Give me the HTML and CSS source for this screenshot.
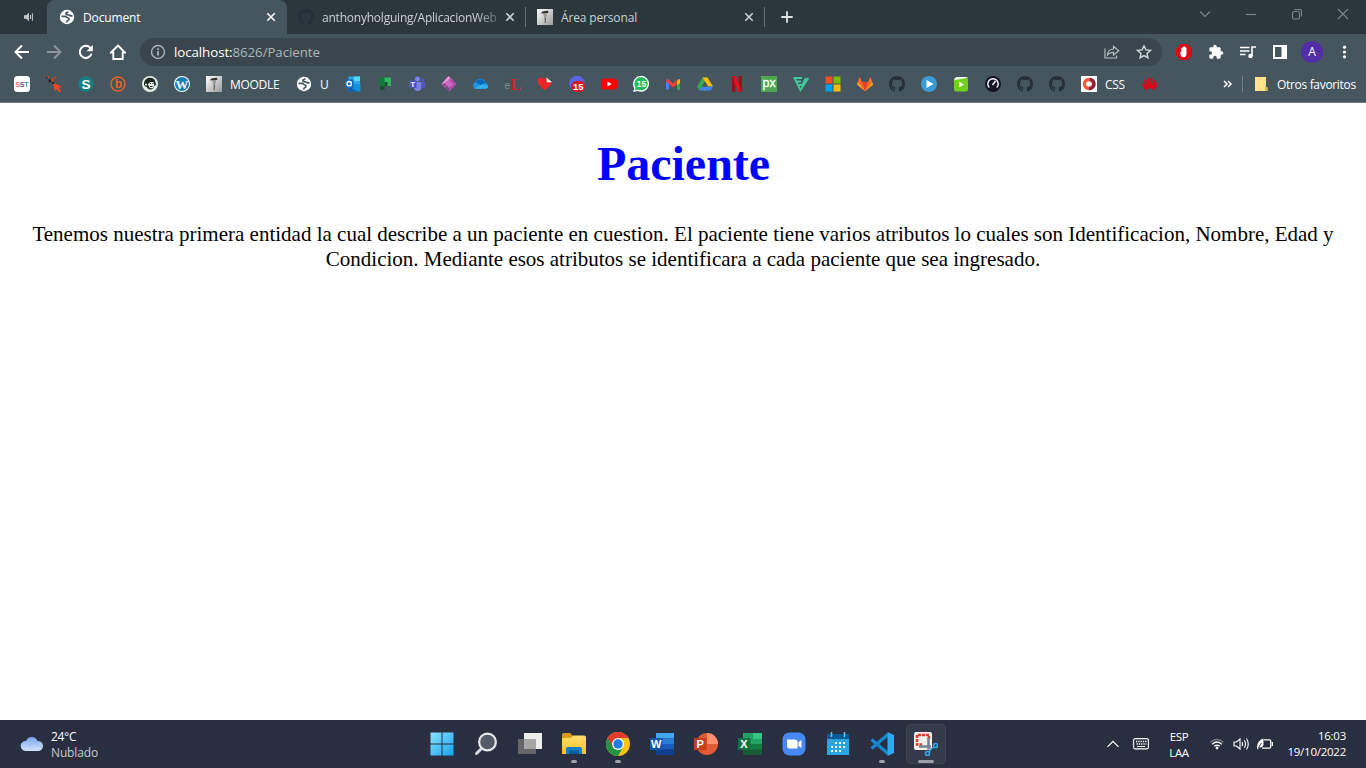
FILE: index.html
```html
<!DOCTYPE html>
<html lang="es">
<head>
<meta charset="utf-8">
<title>Document</title>
<link rel="stylesheet" href="styles.css">
</head>
<body>
<svg class="defs" width="0" height="0">
  <defs>
    <linearGradient id="silver" x1="0" y1="0" x2="1" y2="1"><stop offset="0" stop-color="#fff"/><stop offset="1" stop-color="#999"/></linearGradient>
    <linearGradient id="win" x1="0" y1="0" x2="1" y2="1"><stop offset="0" stop-color="#8be2fc"/><stop offset="1" stop-color="#13a4f4"/></linearGradient>
    <linearGradient id="cloud" x1="0" y1="0" x2="0" y2="1"><stop offset="0" stop-color="#7ba5ee"/><stop offset="1" stop-color="#d2e4fb"/></linearGradient>
    <linearGradient id="folder" x1="0" y1="0" x2="0" y2="1"><stop offset="0" stop-color="#ffdf72"/><stop offset="1" stop-color="#fbbf20"/></linearGradient>
    <symbol id="globe" viewBox="0 0 16 16"><circle cx="8" cy="8" r="7.200" fill="#fff"/><path d="M2.500 7.300h3.600c1.500 0 1.700 1.600 2.900 1.700 1.300.2 1.300 1.700.1 2.200-1.200.4-1.200 1-1.500 2.300M9 2.500c-.3 1.300-2.200 1-2.200 2.300 0 1.100 1.900 1 3 1.200 1.100.3 1.700 1.200 3.700.8" fill="none" stroke="#45565f" stroke-width="1.700"/></symbol>
    <symbol id="github" viewBox="0 0 16 16"><path d="M8 0C3.58 0 0 3.58 0 8c0 3.540 2.290 6.530 5.470 7.590.4.070.550-.170.550-.380 0-.190-.010-.820-.010-1.490-2.010.370-2.530-.490-2.690-.940-.090-.230-.480-.940-.820-1.130-.280-.150-.680-.520-.010-.530.630-.010 1.080.580 1.230.820.720 1.210 1.870.870 2.330.660.070-.520.280-.870.510-1.070-1.780-.2-3.640-.890-3.640-3.950 0-.870.310-1.590.820-2.150-.080-.2-.360-1.020.080-2.120 0 0 .670-.210 2.200.820.640-.180 1.320-.270 2-.270s1.360.090 2 .270c1.530-1.040 2.200-.820 2.200-.820.440 1.100.160 1.920.080 2.120.510.560.820 1.270.820 2.150 0 3.070-1.870 3.750-3.650 3.950.290.250.540.730.540 1.480 0 1.070-.010 1.930-.010 2.200 0 .210.150.460.550.380A8.010 8.010 0 0 0 16 8c0-4.420-3.580-8-8-8z" fill="currentColor"/></symbol>
    <symbol id="statue" viewBox="0 0 16 16"><path fill="url(#silver)" d="M0 0h16v16H0z"/><path d="M3.500 4.200l2.500-2 5-.4.500 2-3 .8z" fill="#333"/><path d="M6 4.500h4L9.500 8l-2 .8z" fill="#999"/><path d="M7.800 8l1.100 1-.4 5h-.8z" fill="#444"/></symbol>
    <symbol id="close" viewBox="0 0 10 10"><path d="M1.300 1.300l7.400 7.400m0-7.400L1.300 8.700" stroke="currentColor" stroke-width="1.600"/></symbol>
  </defs>
</svg>

<header class="browser">
  <div class="tabstrip">
    <div class="tab-audio"><svg width="12" height="12" viewBox="0 0 12 12"><path d="M1 4.200h2.200L6 1.800v8.400L3.200 7.800H1z" fill="#c3c8cb"/><path d="M7.500 4v4M9.400 2.200v7.600" stroke="#c3c8cb"/></svg></div>
    <div class="tab tab-active">
      <svg class="i16"><use href="#globe"/></svg><span class="tab-title">Document</span><svg class="x"><use href="#close"/></svg>
    </div>
    <div class="tab tab-repo">
      <svg class="i16 dark"><use href="#github"/></svg><span class="tab-title fade">anthonyholguing/AplicacionWeb</span><svg class="x"><use href="#close"/></svg>
    </div>
    <div class="tab tab-area">
      <svg class="i16"><use href="#statue"/></svg><span class="tab-title">Área personal</span><svg class="x"><use href="#close"/></svg>
    </div>
    <svg class="plus" viewBox="0 0 12 12"><path d="M6 .3v11.400M.3 6h11.400" stroke="#e0e3e4" stroke-width="1.800"/></svg>
    <div class="winbtns">
      <svg width="12" height="12" viewBox="0 0 12 12"><path d="M1 3.500l5 5 5-5"/></svg>
      <svg width="12" height="12" viewBox="0 0 12 12"><path d="M1 6.500h10"/></svg>
      <svg width="12" height="12" viewBox="0 0 12 12"><rect x="1.500" y="3.500" width="7" height="7.500" rx="1.500"/><path d="M3.500 1.500H9q1.500 0 1.500 1.500v5.500"/></svg>
      <svg width="12" height="12" viewBox="0 0 12 12"><path d="M1 1l10 10M11 1L1 11"/></svg>
    </div>
  </div>

  <div class="toolbar">
    <div class="nav">
      <svg viewBox="0 0 16 16"><path d="M15 8H2M8 1.500L1.500 8 8 14.500" fill="none" stroke="#fff" stroke-width="2"/></svg>
      <svg viewBox="0 0 16 16"><path d="M1 8h13M8 1.500L14.500 8 8 14.500" fill="none" stroke="#8b969c" stroke-width="2"/></svg>
      <svg viewBox="0 0 16 16"><path d="M13.500 9.800A6 6 0 1 1 12.400 4" fill="none" stroke="#fff" stroke-width="2"/><path d="M14.800 1v6.200H8.600z" fill="#fff"/></svg>
      <svg viewBox="0 0 16 16"><path d="M1 8.500L8 1.600l7 6.900h-2.300V15H3.300V8.500z" fill="none" stroke="#fff" stroke-width="1.900"/></svg>
    </div>
    <div class="omnibox">
      <svg width="16" height="16" viewBox="0 0 16 16"><circle cx="8" cy="8" r="6.500" fill="none" stroke="#a8b0b4" stroke-width="1.400"/><path d="M8 7v4.500M8 4.200v1.700" stroke="#b8c0c4" stroke-width="1.600"/></svg>
      <span class="url"><b>localhost:</b>8626/Paciente</span>
      <svg class="share" viewBox="0 0 16 16"><path d="M1 4.500V14h11.500v-2.500M3.500 11c.2-4 2.500-6 6-6V2.200l5.300 4.500L9.500 11V8.300c-2.800 0-4.500.8-6 2.700z" fill="none" stroke="#b5bcc0" stroke-width="1.200"/></svg>
      <svg width="16" height="16" viewBox="0 0 16 16"><path d="M8 1.800l1.900 4.100 4.500.5-3.400 3 .9 4.400L8 11.600l-3.900 2.200.9-4.400-3.400-3 4.500-.5z" fill="none" stroke="#d1d6d8" stroke-width="1.400"/></svg>
    </div>
    <div class="extensions">
      <svg viewBox="0 0 16 16"><path d="M4.700 0h6.600L16 4.700v6.600L11.300 16H4.700L0 11.300V4.700z" fill="#d80d16"/><path d="M4.200 7.700l1 .8V4.200h1.300V7V2.800h1.400V7V2.500h1.300V7V3.600h1.300v6.100c0 2-1 3.500-3 3.500-2.400 0-3.100-2.300-3.300-5.500z" fill="#fff"/></svg>
      <svg viewBox="0 0 24 24"><path d="M20.500 11H19V7c0-1.100-.9-2-2-2h-4V3.500a2.500 2.500 0 0 0-5 0V5H4c-1.100 0-2 .9-2 2v3.800h1.500a2.700 2.700 0 0 1 0 5.400H2V20c0 1.100.9 2 2 2h3.800v-1.500a2.700 2.700 0 0 1 5.400 0V22H17c1.100 0 2-.9 2-2v-4h1.500a2.500 2.500 0 0 0 0-5z" fill="#fff"/></svg>
      <svg viewBox="0 0 16 16"><path d="M0 3.500h9.500M0 7h9.500M0 10.500h5.500M12 12V3h4" stroke="#fff" stroke-width="1.600" fill="none"/><circle cx="10.500" cy="12" r="2.300" fill="#fff"/></svg>
      <svg viewBox="0 0 16 16"><path d="M1 1h14v14H1zM3 3v10h6.500V3z" fill="#fff" fill-rule="evenodd"/></svg>
      <span class="avatar">A</span>
      <svg viewBox="0 0 16 16"><g fill="#fff"><circle cx="8.500" cy="3.200" r="1.600"/><circle cx="8.500" cy="8" r="1.600"/><circle cx="8.500" cy="12.800" r="1.600"/></g></svg>
    </div>
  </div>

  <nav class="bookmarks">
    <svg viewBox="0 0 16 16"><rect width="16" height="16" rx="3.500" fill="#fff"/><g class="mark" font-size="7"><text x="1.200" y="10.500" fill="#ed6a65">S</text><text x="5.700" y="10.500" fill="#6a5a80">S</text><text x="10.200" y="10.500" fill="#1aa39a">T</text></g></svg>
    <svg viewBox="0 0 16 16"><path d="M6.500 6L15.800 11l-3.500.7L15.500 15l-2 1.500-3-3.500L9 15.500z" fill="#fa421c"/><path d="M1 0h2v2H1zM5 2.500h3v3H5zM8.500.5h2v2h-2z" fill="#ca4427"/><path d="M0 1h1.500v1.500H0zM2.500 3.500h2.800v3H2.500zM6 6h2v2H6z" fill="#20262a"/></svg>
    <svg viewBox="0 0 16 16"><circle cx="8" cy="8" r="7.800" fill="#147f84"/><text class="mark" x="3.500" y="12.700" font-size="13.500" fill="#fff">S</text></svg>
    <svg viewBox="0 0 16 16"><circle cx="8" cy="8" r="7" fill="none" stroke="#ee6123" stroke-width="1.400"/><text class="mark" x="4.700" y="12" font-size="12" fill="#ee6123">b</text></svg>
    <svg viewBox="0 0 16 16"><circle cx="8" cy="8" r="8" fill="#e3eee6"/><path d="M2 8c0-4 3-6.500 6.500-6.200 2.900.2 5 2.200 4.800 4.200l1 3-2 .7c-.5 2.500-2.500 4.500-5 3.700-2-.6-1.800-2.200-2.800-2.700-1.500 0-2.500-1-2.500-2.700z" fill="#1e2926"/><path d="M6 8.500c1-2.500 3-3 5.500-2.200l.8 2.200-1 3.500-3.500.2z" fill="#e3eee6"/><path d="M8 7.500h1M10.500 7.500h1M8 10.500h2.500" stroke="#222"/><circle cx="4" cy="8.600" r="1.100" fill="#e3eee6"/></svg>
    <svg viewBox="0 0 16 16"><circle cx="8" cy="8" r="8" fill="#fff"/><circle cx="8" cy="8" r="7" fill="#187cb4"/><text class="serif" x="1.600" y="12.500" font-size="12.800" fill="#fff">W</text></svg>
    <svg><use href="#statue"/></svg><span class="bm-moodle">MOODLE</span>
    <svg><use href="#globe"/></svg><span class="bm-u">U</span>
    <svg viewBox="0 0 16 16"><path d="M3.500.5H15V8H3.500z" fill="#28a8ea"/><path d="M9 .5h6V5H9z" fill="#50d9ff"/><path d="M3.500 8h12v7.500h-12z" fill="#1490df"/><path d="M3.500 10l9 5.500h-9z" fill="#0a5fa8"/><path d="M0 3.500h8.500V12H0z" fill="#0f6cbd"/><circle cx="4.200" cy="7.700" r="2.200" fill="none" stroke="#fff" stroke-width="1.400"/></svg>
    <svg viewBox="0 0 16 16"><path d="M2 1.500h6V10H2z" fill="#12783c"/><path d="M7.500 1.500H14V10H7.500z" fill="#33b565"/><path d="M7.500 6h3v4h-3zM3 10h4.500v4H3z" fill="#14532f"/></svg>
    <svg viewBox="0 0 16 16"><circle cx="8.500" cy="3" r="2.500" fill="#7b83eb"/><circle cx="13.500" cy="4" r="1.700" fill="#5059c9"/><path d="M5 6h7.500v5a4 4 0 0 1-7.500 2z" fill="#7b83eb"/><path d="M12.500 6H16v5q-1 2-3.500 1z" fill="#5059c9"/><path d="M0 4.500h7.500V12H0z" fill="#4b53bc"/><text class="mark" x="1.500" y="10.800" font-size="7.500" fill="#fff">T</text></svg>
    <svg viewBox="0 0 16 16"><path d="M7.500 0L11.500 4 4.500 12 .5 8z" fill="#e89bdc"/><path d="M9.500 2l6 6-7 7.500-1.500-1.500 4.500-6-4-4z" fill="#b44bab"/><path d="M4 6l4-2 4 4-4 4.500z" fill="#c767bd"/><path d="M.5 8l4-1 4 8.500z" fill="#9c3f97"/></svg>
    <svg viewBox="0 0 16 16"><path d="M3 12.700a3.500 3.500 0 0 1-.5-6.800A5.300 5.300 0 0 1 12.500 7a3 3 0 0 1 .8 5.700z" fill="#1c96e5"/><path d="M2.500 6A5.300 5.300 0 0 1 12 6.500L8 9.500z" fill="#0968ba"/><path d="M2 12.300L9 8.300l6.500 2q-.4 2.400-2.500 2.400H3z" fill="#35b1f0"/></svg>
    <svg class="spill" viewBox="0 0 16 16"><text x="-.5" y="13" font-family="Liberation Sans" font-size="10" fill="#858b90">e</text><text class="serif" x="5.500" y="13.500" font-size="16" fill="#d8202a">L</text></svg>
    <svg viewBox="0 0 16 16"><path d="M.5 5C.5 1.500 4 .5 7 3l2.500-1.500L15 6.500C14 9.500 10.500 12 7.500 14.200 4 10.800.5 8 .5 5z" fill="#ee2525"/><path d="M9.500 1.500L15 6.300H9.700z" fill="#fff"/></svg>
    <svg viewBox="0 0 16 16"><circle cx="8" cy="7.500" r="7.800" fill="#5865e8"/><rect x="2.500" y="5" width="13.500" height="11" rx="5" fill="#db1420"/><text class="mark" x="4" y="14" font-size="9.500" fill="#fff">15</text></svg>
    <svg viewBox="0 0 16 16"><rect y="2.500" width="16" height="11" rx="2.500" fill="#f00"/><path d="M6.300 5.500v5L10.700 8z" fill="#fff"/></svg>
    <svg viewBox="0 0 16 16"><path d="M.2 16l1-4A8 8 0 1 1 4.500 15z" fill="#fff"/><path d="M1.700 14.500l.9-3A6.600 6.600 0 1 1 5 13.600z" fill="#20ba58"/><text class="mark" x="3.700" y="11" font-size="8.500" fill="#fff">15</text></svg>
    <svg viewBox="0 0 16 16"><path d="M2.500 3.500v10M13.500 3.500v10" stroke-width="3" stroke="#4285f4"/><path d="M13.500 5v8.500" stroke-width="3" stroke="#34a853"/><path d="M1.500 4l6.500 5.500L14.500 4" stroke="#ea4335" fill="none" stroke-width="3"/><path d="M13 4l2-1v4l-3 2V5z" fill="#fbbc04"/></svg>
    <svg viewBox="0 0 16 16"><path d="M5.500 1.500h5L5 11l-2.500 3.500L0 10.800z" fill="#34a853"/><path d="M5.500 1.500h5l5.500 9h-5z" fill="#fbbc04"/><path d="M5 10.500h11l-2.500 4h-11z" fill="#4285f4"/><path d="M8 5.500l3 5H5z" fill="#45565f"/></svg>
    <svg viewBox="0 0 16 16"><path d="M3 0h3.500v16L3 15.500zM9.500 0H13v15.500l-3.500.5z" fill="#a30b14"/><path d="M3 0h3.500L13 15.500 9.500 16z" fill="#df111d"/></svg>
    <svg viewBox="0 0 16 16"><path d="M0 0h16v16H0z" fill="#4ca64d"/><text x="1.500" y="10.800" font-family="Liberation Sans" font-size="12.500" fill="#fff" stroke="#fff" stroke-width=".3">px</text></svg>
    <svg viewBox="0 0 16 16"><path d="M.5 2h8.500M1.500 2l6 12L15.300 2M4 5.500h4M6 9h3.500l3.500-7" stroke="#40ca9c" stroke-width="2" fill="none"/></svg>
    <svg viewBox="0 0 16 16"><path d="M.5.500h7v7h-7z" fill="#f25022"/><path d="M8.500.500h7v7h-7z" fill="#7fba00"/><path d="M.5 8.500h7v7h-7z" fill="#00a4ef"/><path d="M8.500 8.500h7v7h-7z" fill="#ffb900"/></svg>
    <svg viewBox="0 0 16 16"><path d="M0 8.500L2.500.8 5 6h6L13.500.8 16 8.500l-8 6.700z" fill="#fc6d26"/><path d="M5 6h6l-3 9.200z" fill="#e24329"/><path d="M0 8.500L1 6l7 9.200zM16 8.500L15 6l-7 9.200z" fill="#fca326"/></svg>
    <svg class="dark"><use href="#github"/></svg>
    <svg viewBox="0 0 16 16"><circle cx="8" cy="8" r="8" fill="#3b9bd5"/><path d="M5.500 4l7 4-7 4z" fill="#fff"/></svg>
    <svg viewBox="0 0 16 16"><rect x="1" y="1" width="14" height="14.500" rx="2.500" fill="#71cf1d"/><path d="M1 4.500Q2 1 5 1h10c-3 2-8 1.500-14 3.500z" fill="#fff"/><path d="M6 5.500l5 3-5 3z" fill="#fff"/></svg>
    <svg viewBox="0 0 16 16"><circle cx="8" cy="8" r="8" fill="#141526"/><path d="M4.300 11.600a5.200 5.200 0 1 1 7.400 0M7.500 9l3-4" stroke="#fff" stroke-width="1.400" fill="none"/></svg>
    <svg class="dark"><use href="#github"/></svg>
    <svg class="dark"><use href="#github"/></svg>
    <svg viewBox="0 0 16 16"><path d="M0 0h16v16H0z" fill="#fff"/><circle cx="8" cy="8" r="4.500" fill="none" stroke="#f15a3b" stroke-width="3.400"/><path d="M9 3.500a4.500 4.500 0 0 1-1 9" fill="none" stroke="#8d1f3e" stroke-width="3.400"/></svg><span class="bm-css">CSS</span>
    <svg viewBox="0 0 16 16"><path d="M7.300 11L6.300 3M8.700 11l1-8M5.700 12L3.200 5M10.300 12l2.500-7M4.300 13L1.300 8.500M11.700 13l3-4.500" stroke="#d4091a" stroke-width="2.300" stroke-linecap="round"/></svg>
    <div class="bm-end">
      <svg class="more" viewBox="0 0 10 8"><path d="M1 1l3 3-3 3M5 1l3 3-3 3" fill="none" stroke="#fff" stroke-width="1.500"/></svg>
      <i class="divider"></i>
      <svg viewBox="0 0 16 16"><path d="M2 1h11v12l1.500-1v3H2z" fill="#ffe48c"/><path d="M12 11h2.500v3.500L12 15z" fill="#dfb742"/></svg>
      <span class="bm-other">Otros favoritos</span>
    </div>
  </nav>
</header>

<main class="page">
  <h1>Paciente</h1>
  <p>Tenemos nuestra primera entidad la cual describe a un paciente en cuestion. El paciente tiene varios atributos lo cuales son Identificacion, Nombre, Edad y<br>Condicion. Mediante esos atributos se identificara a cada paciente que sea ingresado.</p>
</main>

<footer class="taskbar">
  <div class="weather">
    <svg width="24" height="24" viewBox="0 0 24 24"><path d="M5.500 19A5 5 0 0 1 6 9a6.200 6.200 0 0 1 11.500 0 5 5 0 0 1 1 10z" fill="url(#cloud)"/><path d="M1 13.500c2-5 8-4 9 0 2-3 6-3.500 8-1" fill="none" stroke="#9cbdf5" stroke-width="1.200"/></svg>
    <div class="forecast"><div class="temp">24°C</div><div class="sky">Nublado</div></div>
  </div>
  <div class="apps">
    <div class="app"><svg viewBox="0 0 24 24"><path d="M.5.500h11v11H.500zM12.500.500h11v11h-11zM.5 12.500h11v11H.500zM12.500 12.500h11v11h-11z" fill="url(#win)"/></svg></div>
    <div class="app"><svg viewBox="0 0 24 24"><path d="M2.500 21.500l6-6" stroke="#d5d8dc" stroke-width="3" stroke-linecap="round"/><circle cx="13.500" cy="10" r="8.400" fill="#555b68" stroke="#e6e8eb" stroke-width="2.200"/></svg></div>
    <div class="app"><svg viewBox="0 0 24 24"><path d="M6 1h18v16H6z" fill="#eee"/><path d="M0 7h18v15H0z" fill="#666"/><path d="M6 7h12v10H6z" fill="#a6a6a6"/></svg></div>
    <div class="app open"><svg viewBox="0 0 24 24"><path d="M0 3q0-2 2-2h6l3 3v5H0z" fill="#d89b16"/><path d="M0 6l9-.2L11 3.500h11q2 0 2 2V22H0z" fill="url(#folder)"/><path d="M4 22v-5q0-2 2-2h12q2 0 2 2v5z" fill="#127fc5"/><path d="M7 18.500h10V22H7z" fill="#075b9b"/></svg></div>
    <div class="app open"><svg viewBox="0 0 24 24"><circle cx="12" cy="12" r="12" fill="#fbc116"/><path d="M1.600 6a12 12 0 0 0 10.400 18l5.200-9L12 12z" fill="#229342"/><path d="M1.600 6a12 12 0 0 1 20.800 0H12L6.800 15z" fill="#e33b2e"/><circle cx="12" cy="12" r="6" fill="#fff"/><circle cx="12" cy="12" r="4.700" fill="#2479e8"/></svg></div>
    <div class="app"><svg viewBox="0 0 24 24"><path d="M6 1h18v5.500H6z" fill="#41a5ee"/><path d="M6 6.500h18V12H6z" fill="#2b7cd3"/><path d="M6 12h18v5.500H6z" fill="#185abd"/><path d="M6 17.500h18V23H6z" fill="#103f91"/><path d="M0 6h12.500v12H0z" fill="#1754ae"/><text x="1.100" y="15.700" class="office">W</text></svg></div>
    <div class="app"><svg viewBox="0 0 24 24"><circle cx="13" cy="12" r="11" fill="#e05a36"/><path d="M13 1a11 11 0 0 1 11 11H13z" fill="#ff8f6b"/><path d="M0 6h12.500v12H0z" fill="#c43e1c"/><text x="2.500" y="15.700" class="office">P</text></svg></div>
    <div class="app"><svg viewBox="0 0 24 24"><path d="M5 1h19v22H5z" fill="#21a366"/><path d="M15 1h9v6h-9z" fill="#33c481"/><path d="M5 12h19v11H5z" fill="#107c41"/><path d="M5 17.500h19V23H5z" fill="#185c37"/><path d="M0 6h12.500v12H0z" fill="#107440"/><text x="2.300" y="15.700" class="office">X</text></svg></div>
    <div class="app"><svg viewBox="0 0 24 24"><rect x=".5" y=".5" width="23" height="23" rx="7" fill="#4689f5"/><path d="M5 7.500h8q2.500 0 2.500 2.500v6.500h-8Q5 16.500 5 14zM16.300 10.200L19.500 8v8l-3.200-2.200z" fill="#fff"/></svg></div>
    <div class="app"><svg viewBox="0 0 24 24"><path d="M1 2h22v21H1z" fill="#29a5df"/><path d="M1 2h22v5H1z" fill="#085a94"/><path d="M5.500 0v5M18.500 0v5" stroke="#5ecaf7" stroke-width="1.500"/><path d="M9 11h11M5 15h15M5 19h11" stroke="#fff" stroke-width="2" stroke-dasharray="2 2"/></svg></div>
    <div class="app open"><svg viewBox="0 0 24 24"><path d="M1.500 7.500L18 21.500M1.500 16.500L18 2.500" stroke="#1687cf" stroke-width="3.500"/><path d="M17.500 0L24 3v18l-6.500 3z" fill="#32a9ef"/></svg></div>
    <div class="app active"><svg viewBox="0 0 24 24"><rect width="18" height="18" rx="2" fill="#f5f2ef"/><path d="M15 7V3H3v9.500h5" fill="none" stroke="#d8401f" stroke-width="2.500" stroke-dasharray="3 1"/><path d="M14.500 5.500v12M5 14.500h12" stroke="#75828c" stroke-width="2.600"/><circle cx="21.500" cy="13.500" r="2" fill="none" stroke="#36a4df" stroke-width="1.700"/><circle cx="13.500" cy="21.500" r="2" fill="none" stroke="#36a4df" stroke-width="1.700"/><path d="M15 20l2-3 3-2" fill="none" stroke="#36a4df" stroke-width="1.500"/></svg></div>
  </div>
  <div class="tray">
    <svg class="chev" viewBox="0 0 12 8"><path d="M.5 6.800L6 1.300l5.500 5.500" fill="none" stroke="#fff" stroke-width="1.200"/></svg>
    <svg class="keyb" viewBox="0 0 16 12"><rect x=".6" y=".6" width="14.800" height="10.300" rx="1.500" fill="none" stroke="#fff" stroke-width="1.100"/><path d="M3 3.500h11M3.500 6h10" stroke="#fff" stroke-width="1.300" stroke-dasharray="1.300 1"/><path d="M4 8.500h8" stroke="#fff"/></svg>
    <div class="lang">ESP<br>LAA</div>
    <svg class="wifi" viewBox="0 0 14 12"><g fill="none" stroke="#fff" stroke-width="1.200"><path d="M.5 4.200Q7-1.500 13.500 4.200" opacity=".4"/><path d="M2.200 6.200Q7 1.800 11.800 6.200M4.300 8.300Q7 5.800 9.700 8.300"/></g><circle cx="7" cy="10" r="1.400" fill="#fff"/></svg>
    <svg class="vol" viewBox="0 0 17 14"><path d="M1 5h2.500L7 2v10L3.500 9H1zM9 5q1.200 2 0 4M11.300 3.200q2.500 3.800 0 7.600M13.500 1.500q3.500 5.500 0 11" fill="none" stroke="#fff" stroke-width="1.100"/></svg>
    <svg class="bat" viewBox="0 0 16 12"><path d="M7 1.800h5.500q1.200 0 1.200 1.200v6q0 1.200-1.200 1.200H5M14.700 4.500h.8v3h-.8" fill="none" stroke="#fff" stroke-width="1.200"/><path d="M6.500.5v6q-.5 3.500-4.500 3L1 11.500l-.8-.5Q-1 3 6.500.500z" fill="#fff"/><path d="M1 10.500L4.500 5" stroke="#292e40" stroke-width=".8"/></svg>
    <div class="clock">16:03<br>19/10/2022</div>
  </div>
</footer>
</body>
</html>
```

FILE: styles.css
```css
* { box-sizing: border-box; }
body {
  margin: 0;
  width: 1366px;
  height: 768px;
  overflow: hidden;
  display: flex;
  flex-direction: column;
  background: #fff;
  font-family: "Open Sans", "Noto Sans", sans-serif;
  font-size: 12px;
  color: #fff;
}
svg { display: block; flex: none; }
.defs { position: absolute; }
span { white-space: nowrap; }
.i16 { width: 16px; height: 16px; }
.dark { color: #252f37; }
.mark { font-family: "Liberation Sans", sans-serif; font-weight: bold; }
.serif { font-family: "Liberation Serif", serif; font-weight: bold; }
.spill { overflow: visible; }

.browser { height: 103px; background: #45565f; border-bottom: 1px solid #72797d; }
.tabstrip { display: flex; align-items: center; height: 34px; background: #2c373d; }
.tab-audio { width: 47px; height: 34px; padding: 11px 0 0 23px; background: #2c373d; border-radius: 0 0 7px 0; }
.tab { display: flex; align-items: center; height: 34px; gap: 8px; color: #cbd0d2; }
.tab-title { flex: 1; letter-spacing: -.15px; }
.x { width: 10px; height: 10px; }
.tab-active { width: 240px; padding: 0 11px 0 12px; background: #45565f; border-radius: 8px 8px 0 0; color: #fff; }
.tab-repo { width: 238px; padding: 0 10px 0 11px; background: #2c373d; border-radius: 0 0 0 8px; }
.fade { width: 175px; flex: none; letter-spacing: -.22px; -webkit-mask-image: linear-gradient(90deg, #000 88%, transparent 105%); mask-image: linear-gradient(90deg, #000 88%, transparent 105%); }
.tab-area { width: 240px; height: 20px; padding: 0 10px 0 11px; border: solid #647077; border-width: 0 1px; }
.plus { width: 12px; height: 12px; margin-left: 16px; }
.winbtns { display: flex; gap: 34px; margin: -6px 17px 0 auto; }
.winbtns path, .winbtns rect { fill: none; stroke: #7c868b; stroke-width: 1.1; }

.toolbar { display: flex; align-items: center; height: 36px; padding-left: 14px; }
.nav { display: flex; gap: 16px; }
.nav svg { width: 16px; height: 16px; }
.omnibox { display: flex; align-items: center; width: 1022px; height: 28px; margin-left: 14px; padding: 0 10px; border-radius: 14px; background: #39464d; }
.url { margin-left: 8px; font-size: 13.3px; letter-spacing: -.07px; color: #aeb6ba; }
.url b { font-weight: 400; color: #fff; }
.share { width: 16px; height: 16px; margin: 0 16px 0 auto; }
.extensions { display: flex; align-items: center; gap: 16px; margin-left: 14px; }
.extensions svg { width: 16px; height: 16px; }
.avatar { width: 22px; height: 22px; margin: 0 -3px; border-radius: 50%; background: #512da8; text-align: center; font-size: 12px; line-height: 22px; }

.bookmarks { display: flex; align-items: center; gap: 16px; height: 28px; padding: 0 10px 0 14px; }
.bookmarks > svg, .bm-end svg { width: 16px; height: 16px; }
.bookmarks span { margin-left: -8px; }
.bm-moodle { width: 50px; letter-spacing: -.3px; }
.bm-u { width: 9px; }
.bm-css { width: 21px; letter-spacing: -.3px; }
.bm-end { display: flex; align-items: center; margin-left: auto; }
.bm-end .more { width: 10px; height: 8px; }
.divider { width: 1px; height: 16px; margin: 0 10px 0 9px; background: #748087; }
.bookmarks .bm-other { width: 79px; margin-left: 8px; letter-spacing: -.32px; }

.page { height: 617px; font-family: "Liberation Serif", serif; color: #000; text-align: center; }
h1 { margin: 33px 0 0 1px; font-size: 48px; line-height: 55px; color: #00f; }
.page p { margin: 31px 0 0; font-size: 21px; line-height: 25px; white-space: nowrap; }

.taskbar { display: grid; grid-template-columns: 422px 528px 1fr; height: 48px; background: #292e40; }
.weather { display: flex; align-items: center; gap: 7px; padding-left: 20px; line-height: 16px; }
.forecast { padding-top: 2px; }
.temp { letter-spacing: -.3px; }
.sky { color: #c5c8cf; letter-spacing: -.15px; }
.apps { display: flex; gap: 4px; }
.app { position: relative; display: flex; align-items: center; justify-content: center; width: 40px; height: 40px; margin-top: 4px; }
.app svg { width: 24px; height: 24px; }
.office { font: bold 11px "Liberation Sans", sans-serif; fill: #fff; }
.open::after, .active::after { content: ""; position: absolute; bottom: 1px; left: 17px; width: 6px; height: 3px; border-radius: 2px; background: #9b9fa9; }
.active { background: #353a4b; border: 1px solid #3e4353; border-radius: 4px; }
.active::after { left: 11px; bottom: 0; width: 16px; }
.tray { display: flex; align-items: center; padding-left: 157px; line-height: 16px; }
.chev { width: 12px; height: 8px; }
.keyb { width: 16px; height: 12px; margin-left: 14px; }
.lang { width: 24px; margin: 1px 0 0 18px; text-align: center; letter-spacing: -.4px; font-size: 11.5px; }
.wifi { width: 14px; height: 12px; margin-left: 19px; }
.vol { width: 17px; height: 14px; margin-left: 9px; }
.bat { width: 16px; height: 12px; margin-left: 7px; }
.clock { margin: 0 20px 0 auto; text-align: right; font-size: 11.5px; letter-spacing: -.25px; }
```
